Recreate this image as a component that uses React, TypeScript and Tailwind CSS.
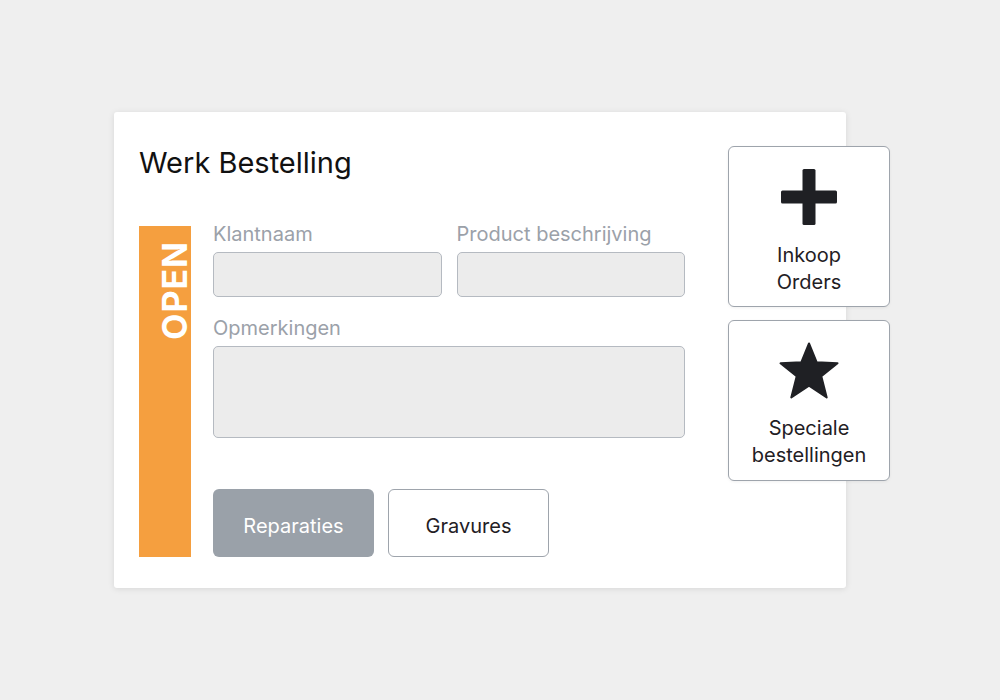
const font = { fontFamily: 'Inter, "Noto Sans", sans-serif' }

function PlusIcon() {
  return (
    <svg width="56" height="56" viewBox="0 0 56 56" fill="#1f2024">
      <rect x="21.5" y="0" width="13" height="56" rx="1.5" />
      <rect x="0" y="21.5" width="56" height="13" rx="1.5" />
    </svg>
  )
}

function StarIcon() {
  return (
    <svg width="62" height="58" viewBox="0 0 62 58" fill="#1f2024">
      <path
        d="M31 1.5 L38.6 20.2 L59.5 21.3 L43.3 34.3 L48.7 55.5 L31 43.6 L13.3 55.5 L18.7 34.3 L2.5 21.3 L23.4 20.2 Z"
        stroke="#1f2024"
        strokeWidth="2"
        strokeLinejoin="round"
      />
    </svg>
  )
}

function Field({ label, className }: { label: string; className?: string }) {
  return (
    <div className={`flex flex-col ${className ?? ''}`}>
      <span className="text-[20px] leading-[24px] text-[#9ba1a9] mb-[6px]">{label}</span>
      <div className="h-[45px] rounded-[5px] border border-[#b5bac1] bg-[#ececec]" />
    </div>
  )
}

function SideCard({ icon, lines, gap, iconH }: { icon: React.ReactNode; lines: string[]; gap: number; iconH: number }) {
  return (
    <div className="w-[162px] h-[161px] bg-white rounded-[6px] border-[1.5px] border-[#9ea4ac] shadow-[0_1px_3px_rgba(0,0,0,0.06)] flex flex-col items-center pt-[21px]">
      <div className="flex items-center justify-center" style={{ height: iconH }}>{icon}</div>
      <div className="text-center text-[20px] leading-[27px] text-[#1f2024]" style={{ marginTop: gap }}>
        {lines.map(l => (
          <div key={l}>{l}</div>
        ))}
      </div>
    </div>
  )
}

export default function App() {
  return (
    <div className="w-[1000px] h-[700px] bg-[#efefef] pt-[112px] pl-[114px]" style={font}>
      <div className="relative w-[732px] h-[476px] bg-white rounded-[3px] shadow-[0_1px_6px_rgba(0,0,0,0.10)] pt-[34px] pl-[25px]">
        <h1 className="text-[29px] leading-[34px] text-[#111] font-normal">Werk Bestelling</h1>

        <div className="flex mt-[42px]">
          <div className="mt-[4px] w-[52px] bg-[#f59f3f] pl-[21px] pt-[15px]">
            <span className="block text-white font-bold text-[34px] leading-[30px] tracking-[1px] [writing-mode:vertical-rl] rotate-180">
              OPEN
            </span>
          </div>

          <div className="ml-[22px] w-[472px] flex flex-col">
            <div className="flex gap-[15px]">
              <Field label="Klantnaam" className="w-[229px]" />
              <Field label="Product beschrijving" className="w-[229px]" />
            </div>
            <span className="mt-[19px] text-[20px] leading-[24px] text-[#9ba1a9] mb-[6px]">Opmerkingen</span>
            <div className="h-[92px] rounded-[5px] border border-[#b5bac1] bg-[#ececec]" />
            <div className="flex gap-[14px] mt-[51px]">
              <button className="w-[161px] h-[68px] rounded-[6px] bg-[#9aa1a9] text-white text-[20px] pt-[5px]">Reparaties</button>
              <button className="w-[161px] h-[68px] rounded-[6px] bg-white border-[1.5px] border-[#9ea4ac] text-[#1f2024] text-[20px] pt-[5px]">Gravures</button>
            </div>
          </div>
        </div>

        <div className="absolute left-[614px] top-[34px] flex flex-col gap-[13px]">
          <SideCard icon={<PlusIcon />} lines={['Inkoop', 'Orders']} gap={17} iconH={57} />
          <SideCard icon={<StarIcon />} lines={['Speciale', 'bestellingen']} gap={15} iconH={58} />
        </div>
      </div>
    </div>
  )
}
